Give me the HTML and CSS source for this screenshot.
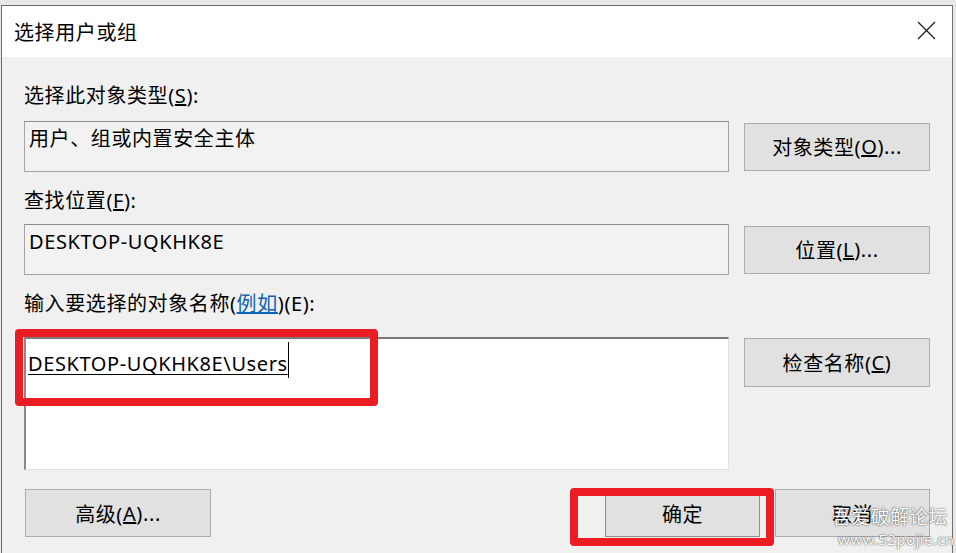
FILE: index.html
```html
<!DOCTYPE html>
<html lang="zh-CN">
<head>
    <meta charset="UTF-8">
    <title>选择用户或组</title>
    <link rel="stylesheet" href="styles.css">
</head>
<body>
    <div class="dialog">
        <div class="titlebar">
            <span class="title">选择用户或组</span>
            <svg class="close" width="19" height="19" viewBox="0 0 19 19">
                <path d="M1 1 L18 18 M18 1 L1 18" stroke="#1a1a1a" stroke-width="1.2" fill="none"/>
            </svg>
        </div>
        <div class="content">
            <div class="label first">选择此对象类型(<u>S</u>):</div>
            <div class="row">
                <div class="field">用户、组或内置安全主体</div>
                <div class="btn">对象类型(<u>O</u>)...</div>
            </div>

            <div class="label">查找位置(<u>F</u>):</div>
            <div class="row row2">
                <div class="field">DESKTOP-UQKHK8E</div>
                <div class="btn">位置(<u>L</u>)...</div>
            </div>

            <div class="label third">输入要选择的对象名称(<a class="link">例如</a>)(E):</div>
            <div class="row row3">
                <div class="names"><span class="name">DESKTOP-UQKHK8E\Users</span><span class="caret"></span></div>
                <div class="btn">检查名称(<u>C</u>)</div>
            </div>

            <div class="bottom">
                <div class="btn">高级(<u>A</u>)...</div>
                <div class="actions">
                    <div class="btn small ok">确定</div>
                    <div class="btn small">取消</div>
                </div>
            </div>
        </div>

        <!-- annotations drawn over the screenshot -->
        <div class="mark mark-names"></div>
        <div class="mark mark-ok"></div>
        <div class="watermark">
            <div class="wm-cn">吾爱破解论坛</div>
            <div class="wm-url">www.52pojie.cn</div>
        </div>
    </div>
</body>
</html>
```

FILE: styles.css
```css
body {
    margin: 0;
    background: #e8e8e8;
    font-family: "Noto Sans", "Noto Sans CJK SC", sans-serif;
    color: #000;
    height: 553px;
    overflow: hidden;
}
.dialog {
    position: relative;
    margin: 5px 0 0 1px;
    width: 952px;
    height: 560px;
    background: #f0f0f0;
    border: 1px solid #6e6e6e;
    border-bottom: none;
    box-sizing: border-box;
}
.titlebar {
    height: 51px;
    background: #ffffff;
    display: flex;
    align-items: center;
    justify-content: space-between;
    padding: 0 16px 0 12px;
}
.title {
    font-size: 20px;
    letter-spacing: 0.6px;
    margin-top: -1px;
}
.close {
    margin-top: -2px;
}
.content {
    padding: 0 22px 0 22px;
    font-size: 20px;
    letter-spacing: 0.6px;
}
.label {
    height: 24px;
    line-height: 24px;
    margin-top: 17px;
}
.label.first {
    margin-top: 27px;
}
.label.third {
    margin-top: 17px;
}
.link {
    color: #0b63b5;
    text-decoration: underline;
}
.row {
    display: flex;
    align-items: center;
    gap: 15px;
    margin-top: 13px;
}
.row2 {
    margin-top: 11px;
}
.row3 {
    margin-top: 21px;
    align-items: flex-start;
}
.field {
    width: 705px;
    height: 51px;
    box-sizing: border-box;
    border: 1px solid #a3a3a3;
    border-top-color: #8c8c8c;
    background: #f2f2f2;
    padding: 3px 0 0 4px;
    line-height: 28px;
}
.names {
    width: 705px;
    height: 133px;
    box-sizing: border-box;
    border: 1px solid #e2e2e2;
    border-top: 2px solid #7a7a7a;
    border-left: 2px solid #8a8a8a;
    background: #ffffff;
    padding: 11px 0 0 2px;
    line-height: 28px;
    display: flex;
    align-items: flex-start;
}
.name {
    text-decoration: underline;
    text-underline-offset: 3px;
    text-decoration-thickness: 1px;
}
.caret {
    width: 1px;
    height: 36px;
    margin-top: -8px;
    background: #000;
}
.btn {
    width: 186px;
    height: 48px;
    box-sizing: border-box;
    border: 1px solid #adadad;
    background: #e1e1e1;
    display: flex;
    align-items: center;
    justify-content: center;
    flex-shrink: 0;
}
.row3 .btn {
    margin-top: 1px;
    height: 49px;
}
.bottom {
    display: flex;
    justify-content: space-between;
    margin-top: 19px;
    padding-left: 1px;
}
.actions {
    display: flex;
    gap: 15px;
}
.btn.small {
    width: 155px;
}
.ok {
    border-color: #8f8f8f;
}
.mark {
    position: absolute;
    border: 8px solid #ec1c24;
    border-radius: 4px;
    box-sizing: border-box;
}
.mark-names {
    left: 13px;
    top: 323px;
    width: 363px;
    height: 77px;
}
.mark-ok {
    left: 568px;
    top: 482px;
    width: 204px;
    height: 58px;
}
.watermark {
    position: absolute;
    left: 830px;
    top: 497px;
    color: #ffffff;
    text-shadow: 0 0 2px rgba(0, 0, 0, 0.6), 0 0 1px rgba(0, 0, 0, 0.5);
}
.wm-cn {
    font-family: "Noto Sans CJK SC", sans-serif;
    font-size: 19px;
    line-height: 26px;
    letter-spacing: 0.3px;
}
.wm-url {
    font-size: 15px;
    line-height: 20px;
    margin-left: 6px;
    letter-spacing: 0.4px;
}
```
